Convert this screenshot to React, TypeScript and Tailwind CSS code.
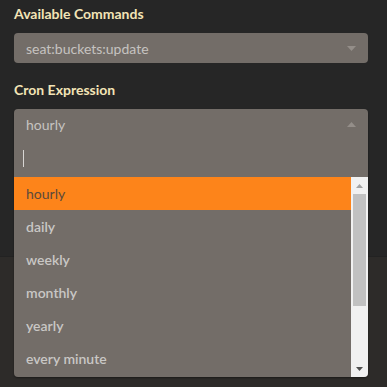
const options = ["hourly", "daily", "weekly", "monthly", "yearly", "every minute"];

function Caret({ up }: { up?: boolean }) {
  return (
    <svg width="9" height="5" viewBox="0 0 9 5" className="fill-[#948e89]">
      {up ? <path d="M0 5 L4.5 0 L9 5 Z" /> : <path d="M0 0 L4.5 5 L9 0 Z" />}
    </svg>
  );
}

export default function App() {
  return (
    <div className="w-[387px] h-[387px] overflow-hidden font-['Lato','Open_Sans',sans-serif] text-[14px]">
      <div className="h-[257px] bg-[#262626] border-b border-[#222] pl-[14px] pt-[5px]">
        <div className="font-bold text-[#f3e4b6] leading-[18px]">Available Commands</div>
        <div className="mt-[10px] w-[354px] h-[30px] rounded-[4px] bg-[#736d68] flex items-center justify-between pl-[12px] pr-[12px]">
          <span className="text-[#c6c3c0]">seat:buckets:update</span>
          <Caret />
        </div>
        <div className="mt-[18px] font-bold text-[#f3e4b6] leading-[18px]">Cron Expression</div>
        <div className="relative mt-[10px] w-[354px]">
          <div className="absolute left-0 right-0 top-0 h-[268px] rounded-[4px] bg-[#736d68] shadow-[0_1px_2px_rgba(0,0,0,0.4)] flex flex-col overflow-hidden">
            <div className="h-[30px] flex items-center justify-between pl-[12px] pr-[12px]">
              <span className="text-[#c6c3c0]">hourly</span>
              <Caret up />
            </div>
            <div className="h-[38px] flex items-center pl-[9px]">
              <div className="w-px h-[17px] bg-[#d8d6d4]" />
            </div>
            <div className="flex flex-1">
              <div className="flex-1 flex flex-col">
                {options.map((o, i) => (
                  <div
                    key={o}
                    className={
                      i === 0
                        ? "h-[33px] flex items-center pl-[12px] bg-[#fd841a] text-[#5b4a3c]"
                        : "h-[33px] flex items-center pl-[12px] text-[#c9c7c5] font-semibold"
                    }
                  >
                    {o}
                  </div>
                ))}
              </div>
              <div className="w-[17px] bg-[#f1f1f1] flex flex-col items-center">
                <div className="h-[17px] flex items-center justify-center">
                  <svg width="7" height="4" viewBox="0 0 7 4" className="fill-[#a3a3a3]"><path d="M0 4 L3.5 0 L7 4 Z" /></svg>
                </div>
                <div className="w-[13px] h-[112px] bg-[#c1c1c1]" />
                <div className="flex-1" />
                <div className="h-[17px] flex items-center justify-center">
                  <svg width="7" height="4" viewBox="0 0 7 4" className="fill-[#505050]"><path d="M0 0 L3.5 4 L7 0 Z" /></svg>
                </div>
              </div>
            </div>
          </div>
        </div>
      </div>
      <div className="h-[130px] bg-[#2d2b29]" />
    </div>
  );
}
